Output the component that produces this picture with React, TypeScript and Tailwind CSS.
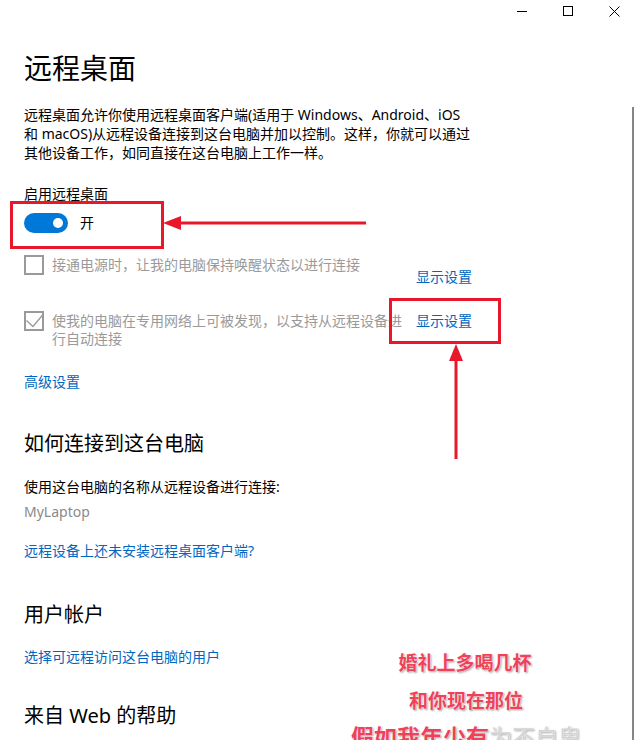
import React from 'react';

const font = "font-['Noto_Sans','Noto_Sans_CJK_SC',sans-serif]";

function Checkbox({ checked }: { checked?: boolean }) {
  return (
    <div className="relative w-[20px] h-[20px] shrink-0 border-2 border-[#9a9a9a]">
      {checked && (
        <svg className="absolute left-[-1px] top-[-2px]" width="20" height="20" viewBox="0 0 20 20" fill="none">
          <path d="M1.5 9.5 L8 15.5 L18 3.5" stroke="#9a9a9a" strokeWidth="1.3" />
        </svg>
      )}
    </div>
  );
}

function Lyrics() {
  const shadow = "[text-shadow:0_0_1px_#fff,0_0_2px_#fff,1px_1px_2px_#888]";
  return (
    <div className={`absolute left-[330px] top-[650px] w-[270px] font-bold ${shadow}`}>
      <div className="text-center text-[19px] leading-[26px] text-[#ef4259] pl-[-0px] ml-[-0px]">婚礼上多喝几杯</div>
      <div className="text-center text-[19px] leading-[26px] text-[#ef4259] mt-[12px] ml-[2px]">和你现在那位</div>
      <div className="text-[23px] leading-[30px] mt-[8px] ml-[21px] whitespace-nowrap">
        <span className="text-[#ef4259]">假如我年少有</span>
        <span className="text-[#d4d4d4] font-normal">为不自卑</span>
      </div>
    </div>
  );
}

export default function App() {
  return (
    <div className={`relative w-[637px] h-[740px] overflow-hidden bg-white text-black ${font}`}>
      {/* title bar */}
      <div className="flex justify-end h-[22px]">
        <div className="w-[46px] flex items-center justify-center">
          <div className="w-[10px] h-[1px] bg-black mt-[1px]" />
        </div>
        <div className="w-[46px] flex items-center justify-center">
          <div className="w-[10px] h-[10px] border border-black" />
        </div>
        <div className="w-[46px] flex items-center justify-center">
          <svg width="11" height="11" viewBox="0 0 11 11">
            <path d="M0.5 0.5 L10.5 10.5 M10.5 0.5 L0.5 10.5" stroke="#000" strokeWidth="1" />
          </svg>
        </div>
      </div>

      <div className="px-6">
        <h1 className="text-[28px] leading-[36px] font-normal mt-[28px]">远程桌面</h1>

        <div className="mt-[19px] text-[14px] leading-[19px]">
          <div className="whitespace-nowrap">远程桌面允许你使用远程桌面客户端(适用于 Windows、Android、iOS</div>
          <div className="whitespace-nowrap">和 macOS)从远程设备连接到这台电脑并加以控制。这样，你就可以通过</div>
          <div className="whitespace-nowrap">其他设备工作，如同直接在这台电脑上工作一样。</div>
        </div>

        <div className="mt-[22px] text-[14px] leading-[20px]">启用远程桌面</div>

        <div className="mt-[9px] flex items-center h-[20px]">
          <div className="w-[44px] h-[20px] rounded-full bg-[#0078d7] flex items-center justify-end pr-[5px]">
            <div className="w-[10px] h-[10px] rounded-full bg-white" />
          </div>
          <span className="ml-[12px] text-[14px] leading-[20px]">开</span>
        </div>

        <div className="mt-[22px] flex">
          <Checkbox />
          <div className="ml-[8px] w-[352px] text-[14px] leading-[20px] text-[#9a9a9a]">
            接通电源时，让我的电脑保持唤醒状态以进行连接
          </div>
          <div className="ml-[12px] mt-[12px] text-[14px] leading-[20px] text-[#0067c0]">显示设置</div>
        </div>

        <div className="mt-[24px] flex">
          <Checkbox checked />
          <div className="ml-[8px] w-[352px] text-[14px] leading-[18px] text-[#9a9a9a] pt-[1px]">
            使我的电脑在专用网络上可被发现，以支持从远程设备进行自动连接
          </div>
          <div className="ml-[12px] text-[14px] leading-[20px] text-[#0067c0] pt-[-1px]">显示设置</div>
        </div>

        <div className="mt-[24px] text-[14px] leading-[20px] text-[#0067c0]">高级设置</div>

        <h2 className="mt-[38px] text-[20px] leading-[28px] font-normal">如何连接到这台电脑</h2>
        <div className="mt-[19px] text-[14px] leading-[20px]">使用这台电脑的名称从远程设备进行连接:</div>
        <div className="mt-[5px] text-[14px] leading-[20px] text-[#8a8a8a]">MyLaptop</div>
        <div className="mt-[19px] text-[14px] leading-[20px] text-[#0067c0]">远程设备上还未安装远程桌面客户端?</div>

        <h2 className="mt-[40px] text-[20px] leading-[28px] font-normal">用户帐户</h2>
        <div className="mt-[18px] text-[14px] leading-[20px] text-[#0067c0]">选择可远程访问这台电脑的用户</div>

        <h2 className="mt-[35px] text-[20px] leading-[28px] font-normal">来自 Web 的帮助</h2>
      </div>

      {/* scrollbar */}
      <div className="absolute left-[632px] top-[107px] w-[2px] h-[640px] bg-[#858585]" />

      {/* annotations */}
      <div className="absolute left-[10px] top-[201px] w-[154px] h-[48px] border-[3px] border-[#e8182a]" />
      <div className="absolute left-[389px] top-[298px] w-[112px] h-[46px] border-[3px] border-[#e8182a]" />
      <svg className="absolute left-0 top-0" width="637" height="740" viewBox="0 0 637 740" fill="none">
        <line x1="178" y1="223" x2="366" y2="223" stroke="#e8182a" strokeWidth="3" />
        <path d="M163 223 L181 216 L181 230 Z" fill="#e8182a" />
        <line x1="456" y1="358" x2="456" y2="459" stroke="#e8182a" strokeWidth="3" />
        <path d="M456 344 L449 361 L463 361 Z" fill="#e8182a" />
      </svg>

      <Lyrics />
    </div>
  );
}
